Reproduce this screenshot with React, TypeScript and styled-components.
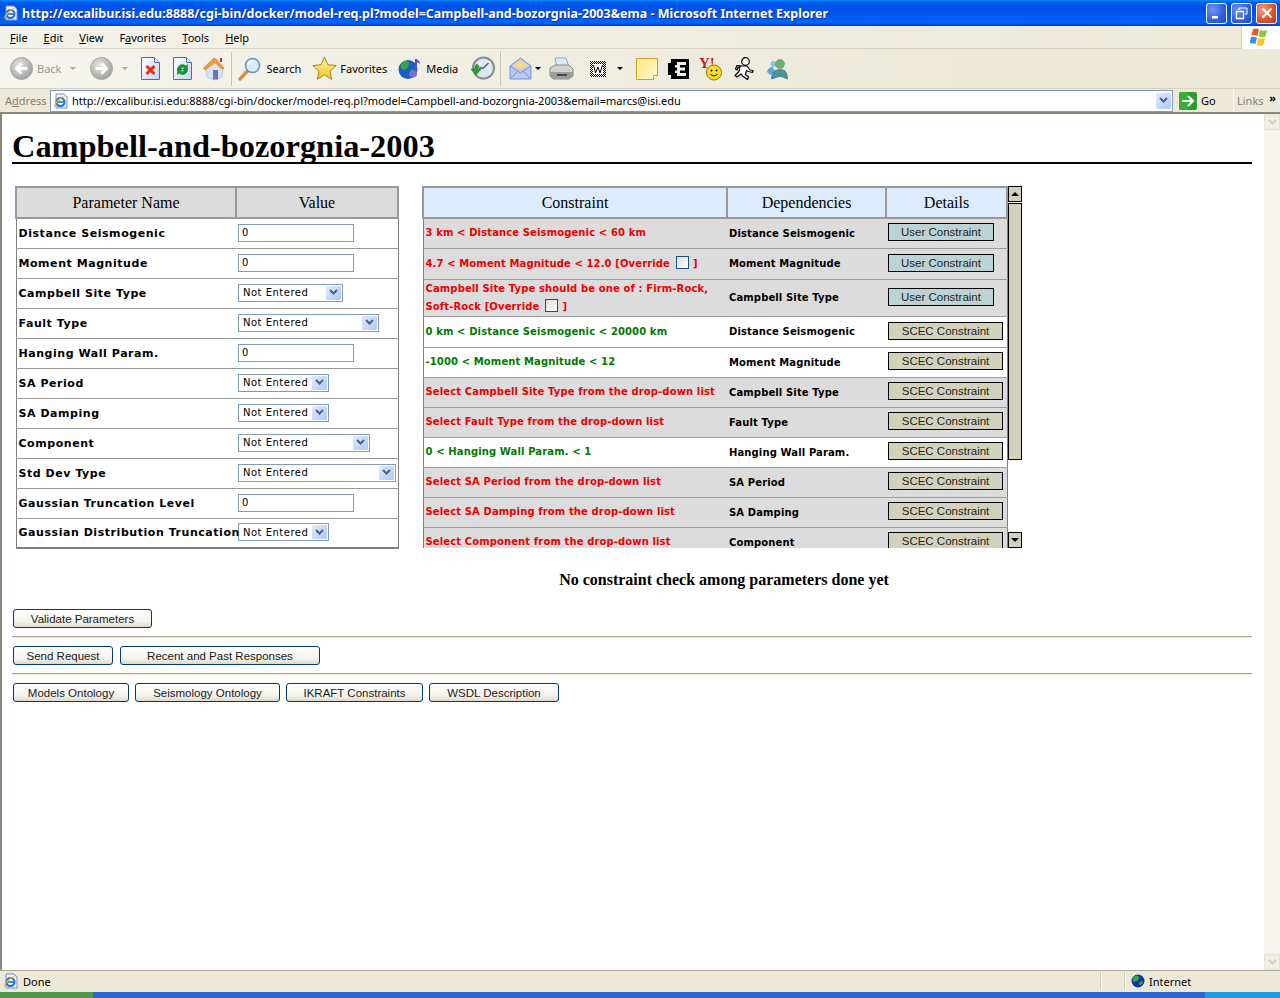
import React from 'react';
import styled, { createGlobalStyle } from 'styled-components';

const GlobalStyle = createGlobalStyle`
  html, body { margin: 0; padding: 0; background: #fff; overflow: hidden; }
  body { font-family: "Liberation Serif", serif; }
`;

const UI_FONT = '"Noto Sans", "DejaVu Sans", sans-serif';
const BOLD_FONT = '"DejaVu Sans", Verdana, sans-serif';

const Win = styled.div`
  width: 1280px;
  height: 998px;
  display: flex;
  flex-direction: column;
  overflow: hidden;
  background: #ece9d8;
`;

/* --- title bar --- */
const TitleBar = styled.div`
  height: 26px;
  flex: none;
  display: flex;
  align-items: center;
  padding: 0 3px 0 3px;
  background: linear-gradient(#0a8cf5 0, #0058ee 10%, #0050e6 40%, #0064fb 85%, #0056e8 92%, #0038c8 100%);
`;
const TitleText = styled.div`
  flex: 1;
  margin-left: 3px;
  font: bold 12.5px ${UI_FONT};
  color: #fff;
  white-space: nowrap;
  text-shadow: 1px 1px 0 #0f2c9c;
`;
const WinBtn = styled.div<{ $close?: boolean }>`
  width: 19px;
  height: 19px;
  margin-left: 4px;
  border: 1px solid #fff;
  border-radius: 3px;
  display: flex;
  align-items: center;
  justify-content: center;
  background: ${p => p.$close
    ? 'radial-gradient(circle at 30% 30%, #f0a080, #d8502c 60%, #c03a18)'
    : 'radial-gradient(circle at 30% 30%, #6f93ee, #2f5fdc 60%, #2048c0)'};
`;

/* --- menu bar --- */
const MenuBar = styled.div`
  height: 22px;
  flex: none;
  display: flex;
  align-items: center;
  padding-left: 10px;
  margin-top: 0;
  background: linear-gradient(to right, #f3f2ea, #ece9d8);
  border-bottom: 1px solid #d8d3bf;
  position: relative;
`;
const MenuItem = styled.span`
  font: 11px ${UI_FONT};
  color: #000;
  margin-right: 16px;
  u { text-decoration: underline; }
`;
const FlagBox = styled.div`
  margin-left: auto;
  width: 38px;
  height: 23px;
  background: #fff;
  border-left: 1px solid #d8d3bf;
  display: flex;
  align-items: center;
  justify-content: center;
`;

/* --- toolbar --- */
const ToolBar = styled.div`
  height: 39px;
  flex: none;
  display: flex;
  align-items: center;
  background: linear-gradient(to right, #f5f4ee, #ece9d8 75%);
  border-bottom: 1px solid #d8d3bf;
`;
const Tool = styled.div<{ $at: number }>`
  margin-left: ${p => p.$at}px;
  display: flex;
  align-items: center;
  flex: none;
`;
const ToolLabel = styled.span<{ $off?: boolean; $gap?: number }>`
  font: 11px ${UI_FONT};
  color: ${p => (p.$off ? '#9b9b93' : '#000')};
  margin-left: ${p => p.$gap ?? 4}px;
`;
const Caret = styled.span<{ $off?: boolean }>`
  width: 0;
  height: 0;
  border-left: 3px solid transparent;
  border-right: 3px solid transparent;
  border-top: 3px solid ${p => (p.$off ? '#a8a8a0' : '#000')};
`;
const ToolSep = styled.div<{ $at: number }>`
  margin-left: ${p => p.$at}px;
  width: 1px;
  height: 34px;
  background: #c9c5b2;
`;

/* --- address bar --- */
const AddressBar = styled.div`
  height: 23px;
  flex: none;
  display: flex;
  align-items: center;
  padding-left: 5px;
  background: #ece9d8;
`;
const AddressLabel = styled.span`
  width: 45px;
  flex: none;
  font: 11px ${UI_FONT};
  color: #85836f;
`;
const AddressField = styled.div`
  width: 1118px;
  height: 20px;
  flex: none;
  display: flex;
  align-items: center;
  background: #fff;
  border: 1px solid #7f9db9;
  padding: 0 1px 0 2px;
`;
const AddressText = styled.span`
  flex: 1;
  margin-left: 3px;
  font: 11px ${UI_FONT};
  color: #000;
  white-space: nowrap;
`;
const ComboArrow = styled.div`
  width: 15px;
  height: 16px;
  flex: none;
  border-radius: 2px;
  display: flex;
  align-items: center;
  justify-content: center;
  background: linear-gradient(135deg, #e1eafe, #aec8f7);
`;
const GoBox = styled.div`
  margin-left: 6px;
  width: 54px;
  display: flex;
  align-items: center;
  flex: none;
`;
const GoLabel = styled.span`
  font: 11px ${UI_FONT};
  margin-left: 4px;
`;
const LinksBox = styled.div`
  height: 23px;
  flex: 1;
  display: flex;
  align-items: center;
  justify-content: space-between;
  padding: 0 4px 0 3px;
  border-left: 1px solid #fbfaf4;
`;
const LinksLabel = styled.span`
  font: 11px ${UI_FONT};
  color: #85836f;
`;
const Chevrons = styled.span`
  font: bold 11px ${UI_FONT};
  color: #000;
  margin-top: -6px;
`;

/* --- page area --- */
const PageFrame = styled.div`
  flex: 1;
  min-height: 0;
  display: flex;
  background: #fff;
  border-top: 2px solid #8a877a;
  border-left: 2px solid #8a877a;
`;
const Page = styled.div`
  flex: 1;
  padding: 0 12px 0 10px;
  min-width: 0;
`;
const Heading = styled.h1`
  margin: 0;
  height: 48px;
  line-height: 64px;
  font: bold 32.4px/64px "Liberation Serif", serif;
  color: #000;
  border-bottom: 2px solid #000;
  box-sizing: content-box;
  white-space: nowrap;
`;
const Panels = styled.div`
  display: flex;
  gap: 23px;
  margin: 22px 0 0 3px;
  height: 362px;
`;

const Table = styled.table`
  border-collapse: collapse;
  table-layout: fixed;
  background: #fff;
`;
const ParamTable = styled(Table)`
  width: 380px;
  height: 362px;
  border: 1px solid #808080;
  border-bottom-width: 2px;
`;
const HeadCell = styled.th<{ $w: number; $bg: string }>`
  width: ${p => p.$w}px;
  height: 29px;
  padding: 0;
  background: ${p => p.$bg};
  border: 2px solid #999;
  font: 16px "Liberation Serif", serif;
  color: #000;
  text-align: center;
`;
const ParamRow = styled.tr`
  height: 30px;
  td { border-bottom: 1px solid #999; }
  &:last-child td { border-bottom: none; }
`;
const NameCell = styled.td`
  padding: 0 0 0 2px;
  font: bold 11px ${BOLD_FONT};
  letter-spacing: 0.55px;
  color: #000;
  white-space: nowrap;
`;
const ValueCell = styled.td`
  padding: 0 0 0 2px;
`;
const TextBox = styled.input`
  display: block;
  box-sizing: border-box;
  width: 116px;
  height: 18px;
  border: 1px solid #7f9db9;
  padding: 0 3px;
  margin: 0 0 1px 0;
  font: 10px ${BOLD_FONT};
  color: #000;
  background: #fff;
  outline: none;
`;
const SelectBox = styled.div<{ $w: number }>`
  box-sizing: border-box;
  width: ${p => p.$w}px;
  height: 18px;
  margin-bottom: 1px;
  display: flex;
  align-items: center;
  justify-content: space-between;
  border: 1px solid #7f9db9;
  padding: 1px 1px 1px 4px;
  font: 10px ${BOLD_FONT};
  letter-spacing: 0.5px;
  color: #000;
  background: #fff;
`;

const ConstraintFrame = styled.div`
  width: 600px;
  height: 362px;
  display: flex;
  justify-content: space-between;
  overflow: hidden;
`;
const ConstraintTable = styled(Table)`
  width: 580px;
  height: fit-content;
  border: 1px solid #808080;
  border-bottom: none;
`;
const ConstraintRow = styled.tr<{ $h: number; $shade: boolean }>`
  height: ${p => p.$h}px;
  background: ${p => (p.$shade ? '#dcdcdc' : '#fff')};
  td { border-bottom: 1px solid #9c9c9c; }
`;
const RuleCell = styled.td<{ $ok: boolean }>`
  padding: 0 0 0 2px;
  font: bold 10px/18px ${BOLD_FONT};
  letter-spacing: 0.12px;
  color: ${p => (p.$ok ? '#007a00' : '#f00000')};
`;
const DepCell = styled.td`
  padding: 0 0 0 2px;
  font: bold 10px ${BOLD_FONT};
  letter-spacing: 0.12px;
  color: #000;
  white-space: nowrap;
`;
const DetailCell = styled.td`
  padding: 0 0 0 2px;
`;
const DetailBtn = styled.button<{ $user: boolean }>`
  display: block;
  box-sizing: border-box;
  width: ${p => (p.$user ? 106 : 115)}px;
  height: 18px;
  margin: 0 0 2px 0;
  padding: 0;
  border: 1px solid #000;
  background: ${p => (p.$user ? '#bdd3d3' : '#d2d2bc')};
  font: 11.5px "Liberation Sans", sans-serif;
  color: #222;
`;
const Override = styled.input`
  appearance: none;
  display: inline-block;
  vertical-align: -2px;
  width: 13px;
  height: 13px;
  margin: 0 4px 0 6px;
  border: 1px solid #1c5180;
  background: linear-gradient(135deg, #dcdcd7, #fff);
`;

const ScrollBar = styled.div`
  width: 17px;
  height: 362px;
  display: flex;
  flex-direction: column;
  background: #fff;
`;
const ScrollBtn = styled.div`
  box-sizing: border-box;
  height: 16px;
  flex: none;
  background: #d2d2bc;
  border: 1px solid #000;
  display: flex;
  align-items: center;
  justify-content: center;
`;
const ScrollThumb = styled.div`
  box-sizing: border-box;
  height: 257px;
  flex: none;
  margin: 1px 0 auto;
  background: #d2d2bc;
  border: 1px solid #000;
`;
const Tri = styled.span<{ $up?: boolean }>`
  width: 0;
  height: 0;
  border-left: 4px solid transparent;
  border-right: 4px solid transparent;
  ${p => (p.$up ? 'border-bottom: 4px solid #000;' : 'border-top: 4px solid #000;')}
`;

const NoCheck = styled.div`
  margin-top: 23px;
  padding-left: 184px;
  text-align: center;
  font: bold 16px/18px "Liberation Serif", serif;
  color: #000;
`;
const ButtonRow = styled.div<{ $top: number; $gap: number }>`
  display: flex;
  gap: ${p => p.$gap}px;
  margin: ${p => p.$top}px 0 0 1px;
`;
const XpButton = styled.button<{ $w: number }>`
  box-sizing: border-box;
  width: ${p => p.$w}px;
  height: 19px;
  padding: 0;
  border: 1px solid #003c74;
  border-radius: 3px;
  background: linear-gradient(#fff, #f3f2ec 70%, #dcd8ca);
  font: 11.5px "Liberation Sans", sans-serif;
  color: #1a1a1a;
`;
const Rule = styled.hr`
  margin: 8px 0 0;
  height: 2px;
  border: none;
  background: linear-gradient(#aca899 50%, #ece9d8 50%);
`;

const PageScroll = styled.div`
  width: 16px;
  flex: none;
  display: flex;
  flex-direction: column;
  justify-content: space-between;
  background: #f5f4ee;
`;
const PageScrollBtn = styled.div`
  height: 16px;
  box-sizing: border-box;
  background: #f0efe6;
  border: 1px solid #e4e2d4;
  border-radius: 2px;
  display: flex;
  align-items: center;
  justify-content: center;
`;

/* --- status bar --- */
const StatusBar = styled.div`
  height: 20px;
  flex: none;
  display: flex;
  align-items: center;
  padding-left: 3px;
  margin-top: 0;
  border-top: 1px solid #aca899;
  background: #ece9d8;
`;
const StatusText = styled.span`
  font: 11px ${UI_FONT};
  margin-left: 4px;
  color: #000;
`;
const StatusSep = styled.div<{ $at?: number }>`
  width: 1px;
  height: 18px;
  background: #d2cfbd;
  border-right: 1px solid #fbfaf4;
  margin-left: ${p => (p.$at === undefined ? 'auto' : `${p.$at}px`)};
`;
const ZoneBox = styled.div`
  width: 154px;
  flex: none;
  display: flex;
  align-items: center;
  padding-left: 5px;
  box-sizing: border-box;
`;
const TaskStrip = styled.div`
  height: 6px;
  flex: none;
  margin-top: 1px;
  display: flex;
`;
const TaskPart = styled.div<{ $w: number | string; $bg: string }>`
  width: ${p => (typeof p.$w === 'number' ? `${p.$w}px` : p.$w)};
  flex: ${p => (p.$w === 'auto' ? 1 : 'none')};
  background: ${p => p.$bg};
`;

/* --- icons --- */
const IeIcon = ({ size = 16 }: { size?: number }) => (
  <svg width={size} height={size} viewBox="0 0 16 16">
    <path d="M3 1h8l3 3v11H3z" fill="#eef3fc" stroke="#7d8fc0" />
    <circle cx="7.5" cy="9" r="4" fill="none" stroke="#1c74d8" strokeWidth="2" />
    <path d="M4 9h7" stroke="#1c74d8" strokeWidth="1.6" />
    <path d="M11 11.5c-1 1.5-5 2.5-6.5 1" stroke="#1c74d8" strokeWidth="1.4" fill="none" />
    <path d="M1 13c1-5 7-10 12-10-3 .5-10 6-11 11z" fill="#f0b020" />
  </svg>
);

const NavCircle = ({ flip }: { flip?: boolean }) => (
  <svg width="23" height="23" viewBox="0 0 23 23">
    <defs>
      <radialGradient id="navG" cx="40%" cy="35%" r="70%">
        <stop offset="0" stopColor="#e6e6e4" />
        <stop offset="1" stopColor="#9c9c9a" />
      </radialGradient>
    </defs>
    <circle cx="11.5" cy="11.5" r="11" fill="url(#navG)" stroke="#a8a8a6" />
    <g transform={flip ? 'matrix(-1 0 0 1 23 0)' : undefined}>
      <path d="M17.5 11.5H7M11.5 6.5l-5 5 5 5" fill="none" stroke="#fff" strokeWidth="3" strokeLinejoin="round" />
    </g>
  </svg>
);

const PageShape = () => (
  <>
    <defs>
      <linearGradient id="pgG" x1="0" y1="0" x2="1" y2="1">
        <stop offset="0" stopColor="#fff" />
        <stop offset="1" stopColor="#c4d4f4" />
      </linearGradient>
    </defs>
    <path d="M.5.5h13l5 5v17H.5z" fill="url(#pgG)" stroke="#5468b0" />
    <path d="M13.5.5v5h5" fill="#dfe8fb" stroke="#5468b0" />
  </>
);

const StopIcon = () => (
  <svg width="19" height="23" viewBox="0 0 19 23">
    <PageShape />
    <path d="M5.5 9l8 8M13.5 9l-8 8" stroke="#ee2b10" strokeWidth="3" />
  </svg>
);

const RefreshIcon = () => (
  <svg width="19" height="23" viewBox="0 0 19 23">
    <PageShape />
    <path d="M4.5 12a5 5 0 0 1 8.5-3l1.5-1.500V13H9.500l2-2a2.500 2.500 0 0 0-4 1z" fill="#10a030" stroke="#0a7020" strokeWidth=".5" />
    <path d="M14.500 13a5 5 0 0 1-8.500 3l-1.500 1.500V12h5l-2 2a2.500 2.500 0 0 0 4-1z" fill="#10a030" stroke="#0a7020" strokeWidth=".5" />
  </svg>
);

const HomeIcon = () => (
  <svg width="24" height="24" viewBox="0 0 24 24">
    <path d="M4 11l1 9 8 3 7-3 1-9-8-7z" fill="#d6e4f8" stroke="#9cb0d4" strokeWidth=".6" />
    <path d="M1 11.500L12 1l2 1 8 9-2 1.500-7-7-9.500 7.500z" fill="#f49a38" stroke="#d87a20" strokeWidth=".6" />
    <rect x="18" y="1" width="2" height="4" fill="#c03020" />
    <rect x="11" y="13" width="5" height="9.500" fill="#6d74b8" />
  </svg>
);

const SearchIcon = () => (
  <svg width="24" height="24" viewBox="0 0 24 24">
    <path d="M9.500 14L2 22" stroke="#d89040" strokeWidth="3.500" strokeLinecap="round" />
    <circle cx="14.500" cy="8.500" r="7" fill="#d6ecfb" stroke="#6c94c8" strokeWidth="1.600" />
    <path d="M10.500 8a4.500 4.500 0 0 1 4-4" stroke="#fff" strokeWidth="1.600" fill="none" />
  </svg>
);

const StarIcon = () => (
  <svg width="25" height="25" viewBox="0 0 25 25">
    <defs>
      <linearGradient id="starG" x1="0" y1="0" x2="0" y2="1">
        <stop offset="0" stopColor="#fff5a8" />
        <stop offset="1" stopColor="#f8c418" />
      </linearGradient>
    </defs>
    <path d="M12.500 1l3.400 7.700 8.300.9-6.200 5.500 1.800 8.200-7.300-4.300-7.300 4.300 1.800-8.200L.8 9.600l8.300-.9z" fill="url(#starG)" stroke="#a08820" />
  </svg>
);

const MediaIcon = () => (
  <svg width="24" height="24" viewBox="0 0 24 24">
    <circle cx="10" cy="12.500" r="9.500" fill="#1c5cc8" />
    <path d="M5 5c3-2 5-1 6 1s-1 3-2 5-3 2-5 1-2-5 1-7zM13 13c2-1 4 0 4 2s-2 4-4 4-1-5 0-6z" fill="#3aa83c" />
    <path d="M18 2v14" stroke="#5a50b0" strokeWidth="2" />
    <path d="M18 2c2 1 4 2 4 5-1-1-3-2-4-2z" fill="#5a50b0" />
    <ellipse cx="15" cy="17" rx="4" ry="3.500" fill="#7d70cc" />
  </svg>
);

const HistoryIcon = () => (
  <svg width="25" height="25" viewBox="0 0 25 25">
    <circle cx="13.500" cy="12" r="10.500" fill="#dbe9f6" stroke="#8c8c8c" strokeWidth="2" />
    <path d="M13.500 12l5-5M13.500 12H9" stroke="#556" strokeWidth="1.300" />
    <path d="M1 13h3.500a8 8 0 0 1 2-5l2.500 2a5 5 0 0 0-1 3H11l-5 6z" fill="#28a028" stroke="#167016" strokeWidth=".5" />
  </svg>
);

const MailIcon = () => (
  <svg width="23" height="23" viewBox="0 0 23 23">
    <path d="M1 9l10.500-8L22 9v13H1z" fill="#b9c8f2" stroke="#8090cc" />
    <path d="M4 8l7.500-5L19 8l-7.500 5z" fill="#fbd48a" />
    <path d="M1 9l10.500 7L22 9M1 22l8-8M22 22l-8-8" fill="none" stroke="#8090cc" />
  </svg>
);

const PrintIcon = () => (
  <svg width="25" height="24" viewBox="0 0 25 24">
    <path d="M6 1h11l3 9H8z" fill="#dce8f8" stroke="#8ea4c4" />
    <path d="M1 11l5-3h14l4 4v7l-4 3H4l-3-3z" fill="#d0d0cc" stroke="#8a8a88" />
    <path d="M1 15h23v4l-4 3H4l-3-3z" fill="#9c9c98" />
    <rect x="8" y="17" width="10" height="2" fill="#444" />
  </svg>
);

const EditIcon = () => (
  <svg width="16" height="16" viewBox="0 0 16 16">
    <defs>
      <pattern id="chk" width="2" height="2" patternUnits="userSpaceOnUse">
        <rect width="1" height="1" fill="#000" />
        <rect x="1" y="1" width="1" height="1" fill="#000" />
      </pattern>
    </defs>
    <rect width="16" height="16" fill="url(#chk)" />
    <rect x="3" y="3" width="10" height="10" fill="#fff" />
    <path d="M3.500 4l2 8 2.500-6 2 6 2.500-8" fill="none" stroke="#000" />
  </svg>
);

const NoteIcon = () => (
  <svg width="22" height="22" viewBox="0 0 22 22">
    <defs>
      <linearGradient id="noteG" x1="0" y1="0" x2="1" y2="1">
        <stop offset="0" stopColor="#ffe98a" />
        <stop offset="1" stopColor="#fff8c8" />
      </linearGradient>
    </defs>
    <path d="M.5.5h21v17l-4 4H.5z" fill="url(#noteG)" stroke="#d0a020" />
    <path d="M17.500 21.500v-4h4" fill="#fff" stroke="#d0a020" />
  </svg>
);

const EIcon = () => (
  <svg width="22" height="22" viewBox="0 0 22 22">
    <path d="M3 1h18v20H3v-4H0V5h3z" fill="#000" />
    <path d="M9 4h9v3h-6v2.500h5v3h-5V15h6v3H9v-3H7v-2.500h2v-3H7V7h2z" fill="#eee" />
  </svg>
);

const YahooIcon = () => (
  <svg width="24" height="24" viewBox="0 0 24 24">
    <text x="0" y="11" fontFamily="Liberation Serif, serif" fontWeight="bold" fontSize="15" fill="#d01818">Y!</text>
    <circle cx="15" cy="15.500" r="7.500" fill="#fbe020" stroke="#8a7410" />
    <circle cx="12.500" cy="13.500" r="1" fill="#000" />
    <circle cx="17.500" cy="13.500" r="1" fill="#000" />
    <path d="M11.500 17c2 2.500 5 2.500 7 0" fill="none" stroke="#000" />
  </svg>
);

const AimIcon = () => (
  <svg width="22" height="24" viewBox="0 0 22 24">
    <circle cx="12.500" cy="4.500" r="3.800" fill="#fff" stroke="#000" strokeWidth="1.200" />
    <path d="M9 9l5 0 3 4 3 .5-.5 2-4-1-2-1-1 4 3 2.500-1 2.500-5-3.500-1.500-2-4 3-2-1.500 4-4 1-5-2 1-1 2.500-1.500-1 1.500-3.500z" fill="#fff" stroke="#000" strokeWidth="1.200" strokeLinejoin="round" />
  </svg>
);

const MsnIcon = () => (
  <svg width="23" height="22" viewBox="0 0 23 22">
    <circle cx="7.500" cy="6" r="3" fill="#8cc4e4" />
    <path d="M1 14c1-4 3-5 6-5l2 5-5 3z" fill="#60a8d8" />
    <circle cx="14" cy="6" r="4.500" fill="#6cb070" stroke="#4c8c70" strokeWidth=".5" />
    <path d="M5 21c0-7 4-10 9-10s8 3 8 10c-3 1-4-2-8-2s-6 3-9 2z" fill="#4c9098" />
  </svg>
);

const FlagIcon = () => (
  <svg width="22" height="20" viewBox="0 0 22 20">
    <path d="M3 2c2-1 4-.5 6 .5L7.500 9c-2-1-4-1-6-.5z" fill="#e8582c" />
    <path d="M10 3c2.500 1 4.500 1 7 0l-1.500 6.500c-2.500 1-4.500 1-7 0z" fill="#8cc83c" />
    <path d="M1 10c2-.5 4-.5 6 .5L5.500 17c-2-1-4-1-6-.5z" fill="#3c90e0" />
    <path d="M8 11c2.500 1 4.500 1 7 0l-1.500 7c-2.500 1-4.500 1-7 0z" fill="#f8c828" />
  </svg>
);

const GoIcon = () => (
  <svg width="18" height="18" viewBox="0 0 18 18">
    <rect width="18" height="18" rx="2" fill="#2c9c2c" />
    <rect width="9" height="18" rx="2" fill="#38b038" />
    <path d="M3 9h11M9 4l5 5-5 5" fill="none" stroke="#fff" strokeWidth="2.200" />
  </svg>
);

const GlobeIcon = () => (
  <svg width="14" height="14" viewBox="0 0 14 14">
    <circle cx="7" cy="7" r="6.500" fill="#1a2fa8" />
    <path d="M3 3c2-2 4-1 5 0S7 6 6 7 3 8 2 7s0-3 1-4zM9 8c1-1 3-1 3 0s-2 4-3 3-1-2 0-3z" fill="#30b030" />
  </svg>
);

const DownChevron = ({ color = '#4d6185' }: { color?: string }) => (
  <svg width="9" height="7" viewBox="0 0 9 7">
    <path d="M1 1l3.500 3.500L8 1" fill="none" stroke={color} strokeWidth="2" />
  </svg>
);

const SelectArrow = styled.div`
  width: 15px;
  height: 14px;
  flex: none;
  border-radius: 1px;
  display: flex;
  align-items: center;
  justify-content: center;
  background: linear-gradient(135deg, #e1eafe, #aec8f7);
`;

/* --- data --- */
type Param = { name: string; select?: number };

const params: Param[] = [
  { name: 'Distance Seismogenic' },
  { name: 'Moment Magnitude' },
  { name: 'Campbell Site Type', select: 105 },
  { name: 'Fault Type', select: 141 },
  { name: 'Hanging Wall Param.' },
  { name: 'SA Period', select: 91 },
  { name: 'SA Damping', select: 91 },
  { name: 'Component', select: 132 },
  { name: 'Std Dev Type', select: 158 },
  { name: 'Gaussian Truncation Level' },
  { name: 'Gaussian Distribution Truncation', select: 91 },
];

type Constraint = {
  rule: React.ReactNode;
  dep: string;
  ok?: boolean;
  user?: boolean;
  shade: boolean;
  h?: number;
};

const constraints: Constraint[] = [
  { rule: '3 km < Distance Seismogenic < 60 km', dep: 'Distance Seismogenic', user: true, shade: true },
  {
    rule: <>4.7 &lt; Moment Magnitude &lt; 12.0 [Override<Override type="checkbox" readOnly />]</>,
    dep: 'Moment Magnitude', user: true, shade: true, h: 31,
  },
  {
    rule: <>Campbell Site Type should be one of : Firm-Rock,<br />Soft-Rock [Override<Override type="checkbox" readOnly />]</>,
    dep: 'Campbell Site Type', user: true, shade: true, h: 37,
  },
  { rule: '0 km < Distance Seismogenic < 20000 km', dep: 'Distance Seismogenic', ok: true, shade: false, h: 31 },
  { rule: '-1000 < Moment Magnitude < 12', dep: 'Moment Magnitude', ok: true, shade: false },
  { rule: 'Select Campbell Site Type from the drop-down list', dep: 'Campbell Site Type', shade: true },
  { rule: 'Select Fault Type from the drop-down list', dep: 'Fault Type', shade: true },
  { rule: '0 < Hanging Wall Param. < 1', dep: 'Hanging Wall Param.', ok: true, shade: false },
  { rule: 'Select SA Period from the drop-down list', dep: 'SA Period', shade: true },
  { rule: 'Select SA Damping from the drop-down list', dep: 'SA Damping', shade: true },
  { rule: 'Select Component from the drop-down list', dep: 'Component', shade: true },
];

const URL_TEXT = 'http://excalibur.isi.edu:8888/cgi-bin/docker/model-req.pl?model=Campbell-and-bozorgnia-2003&email=marcs@isi.edu';

const App: React.FC = () => (
  <Win>
    <GlobalStyle />
    <TitleBar>
      <IeIcon />
      <TitleText>http://excalibur.isi.edu:8888/cgi-bin/docker/model-req.pl?model=Campbell-and-bozorgnia-2003&amp;ema - Microsoft Internet Explorer</TitleText>
      <WinBtn>
        <svg width="11" height="11" viewBox="0 0 11 11"><rect x="1" y="8" width="6" height="2.500" fill="#fff" /></svg>
      </WinBtn>
      <WinBtn>
        <svg width="13" height="13" viewBox="0 0 13 13">
          <path d="M4 3V1h8v6h-2" fill="none" stroke="#fff" />
          <path d="M1.500 4.500h7v7h-7z" fill="none" stroke="#fff" strokeWidth="1.300" />
        </svg>
      </WinBtn>
      <WinBtn $close>
        <svg width="12" height="12" viewBox="0 0 12 12"><path d="M1.500 1.500l9 9M10.500 1.500l-9 9" stroke="#fff" strokeWidth="2" /></svg>
      </WinBtn>
    </TitleBar>

    <MenuBar>
      <MenuItem><u>F</u>ile</MenuItem>
      <MenuItem><u>E</u>dit</MenuItem>
      <MenuItem><u>V</u>iew</MenuItem>
      <MenuItem>F<u>a</u>vorites</MenuItem>
      <MenuItem><u>T</u>ools</MenuItem>
      <MenuItem><u>H</u>elp</MenuItem>
      <FlagBox><FlagIcon /></FlagBox>
    </MenuBar>

    <ToolBar>
      <Tool $at={10}><NavCircle /><ToolLabel $off>Back</ToolLabel></Tool>
      <Tool $at={9}><Caret $off /></Tool>
      <Tool $at={14}><NavCircle flip /></Tool>
      <Tool $at={9}><Caret $off /></Tool>
      <Tool $at={13}><StopIcon /></Tool>
      <Tool $at={13}><RefreshIcon /></Tool>
      <Tool $at={10}><HomeIcon /></Tool>
      <ToolSep $at={5} />
      <Tool $at={6}><SearchIcon /><ToolLabel>Search</ToolLabel></Tool>
      <Tool $at={11}><StarIcon /><ToolLabel $gap={3}>Favorites</ToolLabel></Tool>
      <Tool $at={11}><MediaIcon /><ToolLabel>Media</ToolLabel></Tool>
      <Tool $at={12}><HistoryIcon /></Tool>
      <ToolSep $at={5} />
      <Tool $at={8}><MailIcon /></Tool>
      <Tool $at={3}><Caret /></Tool>
      <Tool $at={8}><PrintIcon /></Tool>
      <Tool $at={16}><EditIcon /></Tool>
      <Tool $at={11}><Caret /></Tool>
      <Tool $at={13}><NoteIcon /></Tool>
      <Tool $at={10}><EIcon /></Tool>
      <Tool $at={9}><YahooIcon /></Tool>
      <Tool $at={10}><AimIcon /></Tool>
      <Tool $at={11}><MsnIcon /></Tool>
    </ToolBar>

    <AddressBar>
      <AddressLabel>A<u>d</u>dress</AddressLabel>
      <AddressField>
        <IeIcon />
        <AddressText>{URL_TEXT}</AddressText>
        <ComboArrow><DownChevron /></ComboArrow>
      </AddressField>
      <GoBox><GoIcon /><GoLabel>Go</GoLabel></GoBox>
      <LinksBox>
        <LinksLabel>Links</LinksLabel>
        <Chevrons>»</Chevrons>
      </LinksBox>
    </AddressBar>

    <PageFrame>
      <Page>
        <Heading>Campbell-and-bozorgnia-2003</Heading>
        <Panels>
          <ParamTable>
            <thead>
              <tr>
                <HeadCell $w={218} $bg="#dcdcdc">Parameter Name</HeadCell>
                <HeadCell $w={160} $bg="#dcdcdc">Value</HeadCell>
              </tr>
            </thead>
            <tbody>
              {params.map(p => (
                <ParamRow key={p.name}>
                  <NameCell>{p.name}</NameCell>
                  <ValueCell>
                    {p.select ? (
                      <SelectBox $w={p.select}>
                        Not Entered
                        <SelectArrow><DownChevron /></SelectArrow>
                      </SelectBox>
                    ) : (
                      <TextBox value="0" readOnly />
                    )}
                  </ValueCell>
                </ParamRow>
              ))}
            </tbody>
          </ParamTable>

          <ConstraintFrame>
            <ConstraintTable>
              <thead>
                <tr>
                  <HeadCell $w={302} $bg="#dcecfc">Constraint</HeadCell>
                  <HeadCell $w={157} $bg="#dcecfc">Dependencies</HeadCell>
                  <HeadCell $w={119} $bg="#dcecfc">Details</HeadCell>
                </tr>
              </thead>
              <tbody>
                {constraints.map(c => (
                  <ConstraintRow key={c.dep + String(c.ok)} $h={c.h ?? 30} $shade={c.shade}>
                    <RuleCell $ok={!!c.ok}>{c.rule}</RuleCell>
                    <DepCell>{c.dep}</DepCell>
                    <DetailCell>
                      <DetailBtn $user={!!c.user}>{c.user ? 'User Constraint' : 'SCEC Constraint'}</DetailBtn>
                    </DetailCell>
                  </ConstraintRow>
                ))}
              </tbody>
            </ConstraintTable>
            <ScrollBar>
              <ScrollBtn><Tri $up /></ScrollBtn>
              <ScrollThumb />
              <ScrollBtn><Tri /></ScrollBtn>
            </ScrollBar>
          </ConstraintFrame>
        </Panels>

        <NoCheck>No constraint check among parameters done yet</NoCheck>

        <ButtonRow $top={20} $gap={0}>
          <XpButton $w={139}>Validate Parameters</XpButton>
        </ButtonRow>
        <Rule />
        <ButtonRow $top={8} $gap={7}>
          <XpButton $w={100}>Send Request</XpButton>
          <XpButton $w={200}>Recent and Past Responses</XpButton>
        </ButtonRow>
        <Rule />
        <ButtonRow $top={8} $gap={6}>
          <XpButton $w={116}>Models Ontology</XpButton>
          <XpButton $w={145}>Seismology Ontology</XpButton>
          <XpButton $w={137}>IKRAFT Constraints</XpButton>
          <XpButton $w={130}>WSDL Description</XpButton>
        </ButtonRow>
      </Page>
      <PageScroll>
        <PageScrollBtn><DownChevron color="#d4d2c4" /></PageScrollBtn>
        <PageScrollBtn><DownChevron color="#d4d2c4" /></PageScrollBtn>
      </PageScroll>
    </PageFrame>

    <StatusBar>
      <IeIcon />
      <StatusText>Done</StatusText>
      <StatusSep />
      <StatusSep $at={22} />
      <ZoneBox><GlobeIcon /><StatusText>Internet</StatusText></ZoneBox>
    </StatusBar>
    <TaskStrip>
      <TaskPart $w={93} $bg="#4f9a4f" />
      <TaskPart $w="auto" $bg="#2a66d4" />
      <TaskPart $w={75} $bg="#1a9ce8" />
    </TaskStrip>
  </Win>
);

export default App;
